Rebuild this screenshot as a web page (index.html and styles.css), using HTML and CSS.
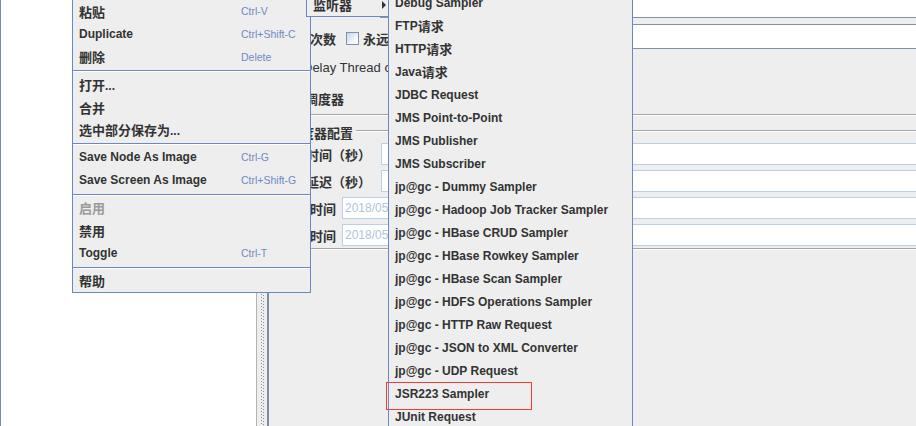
FILE: index.html
```html
<!DOCTYPE html>
<html lang="zh">
<head>
<meta charset="utf-8">
<title>JMeter</title>
<link rel="stylesheet" href="styles.css">
</head>
<body>
<div class="app">
  <div class="tree"></div>
  <div class="splitter"><span class="bumps"></span></div>
  <div class="main">
    <div class="field field-top"></div>
    <div class="row loop-row">
      <div class="inline-group">
        <span class="zh">循环次数</span>
        <span class="checkbox cb-loop"></span>
        <span class="zh forever">永远</span>
      </div>
      <div class="field field-loop"></div>
    </div>
    <div class="row check-row delay-row">
      <span class="checkbox"></span>
      <span class="check-text">Delay Thread creation until needed</span>
    </div>
    <div class="row check-row sched-row">
      <span class="checkbox"></span>
      <span class="zh check-text-zh">调度器</span>
    </div>
    <div class="etched sep-top"></div>
    <div class="group-title">
      <span class="zh">调度器配置</span>
      <span class="etched title-line"></span>
    </div>
    <div class="frow frow-long first">
      <span class="zh flabel">持续时间（秒）</span>
      <div class="field dis"></div>
    </div>
    <div class="frow frow-long">
      <span class="zh flabel">启动延迟（秒）</span>
      <div class="field dis"></div>
    </div>
    <div class="frow frow-short">
      <span class="zh flabel">启动时间</span>
      <div class="field dis"><span class="dtext">2018/05/08 14:30:25</span></div>
    </div>
    <div class="frow frow-short">
      <span class="zh flabel">结束时间</span>
      <div class="field dis"><span class="dtext">2018/05/08 14:30:25</span></div>
    </div>
    <div class="etched sep-bottom"></div>
  </div>

  <div class="menu ctx">
    <div class="item"><span class="label"><span class="zh">粘贴</span></span><span class="key">Ctrl-V</span></div>
    <div class="item"><span class="label">Duplicate</span><span class="key">Ctrl+Shift-C</span></div>
    <div class="item"><span class="label"><span class="zh">删除</span></span><span class="key">Delete</span></div>
    <div class="sep"></div>
    <div class="item"><span class="label"><span class="zh">打开</span>...</span></div>
    <div class="item"><span class="label"><span class="zh">合并</span></span></div>
    <div class="item"><span class="label"><span class="zh">选中部分保存为</span>...</span></div>
    <div class="sep"></div>
    <div class="item"><span class="label">Save Node As Image</span><span class="key">Ctrl-G</span></div>
    <div class="item"><span class="label">Save Screen As Image</span><span class="key">Ctrl+Shift-G</span></div>
    <div class="sep"></div>
    <div class="item disabled"><span class="label"><span class="zh">启用</span></span></div>
    <div class="item"><span class="label"><span class="zh">禁用</span></span></div>
    <div class="item"><span class="label">Toggle</span><span class="key">Ctrl-T</span></div>
    <div class="sep"></div>
    <div class="item"><span class="label"><span class="zh">帮助</span></span></div>
  </div>

  <div class="menu add">
    <div class="item sub"><span class="zh">监听器</span><span class="arrow"></span></div>
  </div>

  <div class="menu sampler">
    <div class="item">Debug Sampler</div>
    <div class="item">FTP<span class="zh">请求</span></div>
    <div class="item">HTTP<span class="zh">请求</span></div>
    <div class="item">Java<span class="zh">请求</span></div>
    <div class="item">JDBC Request</div>
    <div class="item">JMS Point-to-Point</div>
    <div class="item">JMS Publisher</div>
    <div class="item">JMS Subscriber</div>
    <div class="item">jp@gc - Dummy Sampler</div>
    <div class="item">jp@gc - Hadoop Job Tracker Sampler</div>
    <div class="item">jp@gc - HBase CRUD Sampler</div>
    <div class="item">jp@gc - HBase Rowkey Sampler</div>
    <div class="item">jp@gc - HBase Scan Sampler</div>
    <div class="item">jp@gc - HDFS Operations Sampler</div>
    <div class="item">jp@gc - HTTP Raw Request</div>
    <div class="item">jp@gc - JSON to XML Converter</div>
    <div class="item">jp@gc - UDP Request</div>
    <div class="item">JSR223 Sampler</div>
    <div class="item">JUnit Request</div>
    <div class="item">LDAP Extended Request</div>
  </div>

  <div class="mark"></div>
</div>
</body>
</html>
```

FILE: styles.css
```css
html, body {
  margin: 0;
  padding: 0;
}
body {
  width: 916px;
  height: 426px;
  overflow: hidden;
  background: #eeeeee;
  font-family: "Liberation Sans", Arial, "Noto Sans CJK SC", sans-serif;
  font-size: 12px;
  color: #333333;
}
.app {
  position: relative;
  display: flex;
  width: 916px;
  height: 426px;
  overflow: hidden;
}
.zh {
  font-family: "Noto Sans CJK SC", sans-serif;
  font-size: 13px;
  font-weight: bold;
}

/* left tree pane */
.tree {
  width: 257px;
  flex: none;
  box-sizing: border-box;
  background: #ffffff;
  border-left: 1px solid #7b8ca3;
  border-right: 1px solid #b4b4b4;
}
.splitter {
  width: 12px;
  flex: none;
  box-sizing: border-box;
  background: #eeeeee;
  border-right: 2px solid #7b8ca3;
}
.bumps {
  display: block;
  width: 3px;
  height: 100%;
  margin-left: 4px;
  background-image: linear-gradient(#8f8f8f 1px, transparent 1px), linear-gradient(#8f8f8f 1px, transparent 1px);
  background-size: 1px 3px, 1px 3px;
  background-position: 0 0, 2px 1px;
  background-repeat: repeat-y;
}

/* main panel */
.main {
  flex: 1;
  min-width: 0;
  margin-right: -6px;
  display: flex;
  flex-direction: column;
}
.field {
  box-sizing: border-box;
  background: #ffffff;
  border: 1px solid #7f92aa;
}
.field-top {
  height: 23px;
  margin: -5px 0 0 111px;
}
.row {
  display: flex;
}
.loop-row {
  margin-top: 6px;
  height: 25px;
  padding-left: 15px;
}
.inline-group {
  display: flex;
  align-items: center;
  padding-top: 3px;
}
.checkbox {
  display: inline-block;
  width: 13px;
  height: 13px;
  box-sizing: border-box;
  border: 1px solid #7f92aa;
  background: linear-gradient(to bottom right, #c3d5ea, #f7fafd 70%, #ffffff);
  flex: none;
}
.cb-loop {
  margin-left: 10px;
}
.forever {
  margin-left: 4px;
}
.field-loop {
  flex: 1;
  margin-left: 8px;
}
.check-row {
  height: 22px;
  align-items: center;
  padding-left: 19px;
}
.delay-row {
  margin-top: 7px;
}
.sched-row {
  margin-top: 9px;
}
.check-text {
  margin-left: 2px;
  font-size: 13px;
  white-space: nowrap;
}
.check-text-zh {
  margin-left: 4px;
}
.etched {
  display: block;
  height: 1px;
  border-top: 1px solid #a3a3a3;
  background: #ffffff;
}
.sep-top {
  margin-top: 5px;
  margin-left: 4px;
}
.group-title {
  display: flex;
  height: 16px;
  margin-top: 9px;
  padding-left: 19px;
  align-items: flex-start;
  line-height: 16px;
}
.title-line {
  flex: 1;
  margin-top: 5px;
  margin-left: 3px;
}
.frow {
  display: flex;
  height: 22px;
  margin-top: 5px;
  align-items: center;
}
.frow.first {
  margin-top: 2px;
}
.frow .field {
  flex: 1;
  height: 22px;
  align-self: stretch;
}
.field.dis {
  border-color: #b8cfe5;
  display: flex;
  align-items: center;
}
.frow-long {
  padding-left: 11px;
}
.frow-long .field {
  margin-left: 10px;
}
.frow-short {
  padding-left: 15px;
}
.frow-short .field {
  margin-left: 6px;
}
.flabel {
  white-space: nowrap;
}
.dtext {
  padding-left: 2px;
  color: #aec4de;
  white-space: nowrap;
}
.sep-bottom {
  margin-top: 2px;
}

/* popup menus */
.menu {
  position: absolute;
  background: #eeeeee;
  border: 1px solid #6c87c6;
  font-weight: bold;
  color: #333333;
}
.menu .item {
  display: flex;
  align-items: center;
  padding-left: 6px;
  white-space: nowrap;
}
.ctx {
  left: 72px;
  top: -1px;
  width: 237px;
  z-index: 1;
}
.ctx .item {
  height: 22.7px;
}
.ctx .label {
  width: 162px;
  flex: none;
}
.ctx .key {
  font-weight: normal;
  font-size: 10.5px;
  color: #6f89c8;
}
.ctx .item.disabled {
  color: #9a9a9a;
}
.sep {
  height: 5px;
  box-sizing: border-box;
  padding-top: 2px;
}
.sep::before {
  content: "";
  display: block;
  border-top: 1px solid #6c87c6;
  border-bottom: 1px solid #ffffff;
}
.add {
  left: 306px;
  top: -8px;
  width: 88px;
  z-index: 2;
}
.add .item {
  height: 23px;
  padding-right: 9px;
}
.arrow {
  margin-left: auto;
  width: 0;
  height: 0;
  border-left: 4px solid #333333;
  border-top: 4px solid transparent;
  border-bottom: 4px solid transparent;
}
.sampler {
  left: 388px;
  top: -10px;
  width: 243px;
  z-index: 3;
}
.sampler .item {
  height: 23px;
}
.mark {
  position: absolute;
  left: 386px;
  top: 382px;
  width: 144px;
  height: 26px;
  border: 1px solid #ef3b3b;
  z-index: 4;
}
```
